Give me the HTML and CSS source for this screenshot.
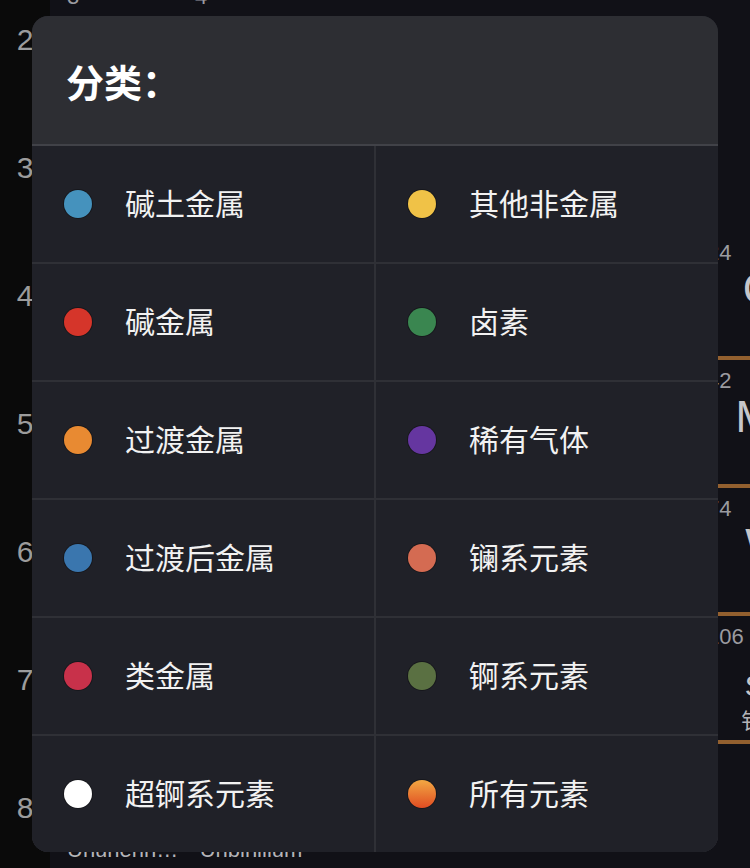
FILE: index.html
```html
<!DOCTYPE html>
<html lang="zh-CN">
<head>
<meta charset="utf-8">
<title>分类</title>
<link rel="stylesheet" href="styles.css">
</head>
<body>
<div class="page">
  <aside class="periods">
    <div class="period">2</div>
    <div class="period">3</div>
    <div class="period">4</div>
    <div class="period">5</div>
    <div class="period">6</div>
    <div class="period">7</div>
    <div class="period">8</div>
  </aside>
  <div class="table">
    <div class="row">
      <div class="cell"><div class="num">3</div></div>
      <div class="cell"><div class="num">4</div></div>
    </div>
    <div class="row">
      <div class="cell"></div>
      <div class="cell"></div>
    </div>
    <div class="row">
      <div class="cell"></div>
      <div class="cell"></div>
      <div class="cell"></div>
      <div class="cell"></div>
      <div class="cell"></div>
      <div class="cell"><div class="num">24</div><div class="sym">Cr</div></div>
    </div>
    <div class="row">
      <div class="cell"></div>
      <div class="cell"></div>
      <div class="cell"></div>
      <div class="cell"></div>
      <div class="cell"></div>
      <div class="cell"><div class="num">42</div><div class="sym">Mo</div></div>
    </div>
    <div class="row">
      <div class="cell"></div>
      <div class="cell"></div>
      <div class="cell"></div>
      <div class="cell"></div>
      <div class="cell"></div>
      <div class="cell"><div class="num">74</div><div class="sym">W</div></div>
    </div>
    <div class="row compact">
      <div class="cell"></div>
      <div class="cell"></div>
      <div class="cell"></div>
      <div class="cell"></div>
      <div class="cell"></div>
      <div class="cell"><div class="num">106</div><div class="sym">Sg</div><div class="name">钅喜</div></div>
    </div>
    <div class="row compact">
      <div class="cell"><div class="num"></div><div class="sym"></div><div class="name">Ununennium</div></div>
      <div class="cell"><div class="num"></div><div class="sym"></div><div class="name">Unbinilium</div></div>
    </div>
  </div>
</div>

<div class="modal">
  <div class="modal-head">
    <h2 class="title">分类：</h2>
  </div>
  <div class="grid">
    <div class="item"><span class="dot alkaline-earth"></span><span class="label">碱土金属</span></div>
    <div class="item"><span class="dot nonmetal"></span><span class="label">其他非金属</span></div>
    <div class="item"><span class="dot alkali"></span><span class="label">碱金属</span></div>
    <div class="item"><span class="dot halogen"></span><span class="label">卤素</span></div>
    <div class="item"><span class="dot transition"></span><span class="label">过渡金属</span></div>
    <div class="item"><span class="dot noble"></span><span class="label">稀有气体</span></div>
    <div class="item"><span class="dot post-transition"></span><span class="label">过渡后金属</span></div>
    <div class="item"><span class="dot lanthanide"></span><span class="label">镧系元素</span></div>
    <div class="item"><span class="dot metalloid"></span><span class="label">类金属</span></div>
    <div class="item"><span class="dot actinide"></span><span class="label">锕系元素</span></div>
    <div class="item"><span class="dot superactinide"></span><span class="label">超锕系元素</span></div>
    <div class="item"><span class="dot all"></span><span class="label">所有元素</span></div>
  </div>
</div>
</body>
</html>
```

FILE: styles.css
```css
html, body {
  margin: 0;
  padding: 0;
}

body {
  width: 750px;
  height: 868px;
  overflow: hidden;
  position: relative;
  background: #111117;
  font-family: "Liberation Sans", "Noto Sans CJK SC", sans-serif;
}

/* ---------- background periodic table ---------- */
.page {
  display: flex;
  align-items: flex-start;
  height: 868px;
  overflow: hidden;
}

.periods {
  width: 50px;
  flex: none;
  margin-top: -24px;
  background: #0a0a0a;
  display: flex;
  flex-direction: column;
}

.period {
  height: 128px;
  display: flex;
  align-items: center;
  justify-content: center;
  font-size: 30px;
  color: #9c9c9c;
}

.table {
  margin-top: -24px;
  padding-left: 9px;
  display: flex;
  flex-direction: column;
}

.row {
  display: flex;
  height: 128px;
}

.cell {
  width: 128px;
  height: 128px;
  box-sizing: border-box;
  padding: 8px 8px 0;
  border-bottom: 4px solid #93602f;
  display: flex;
  flex-direction: column;
  flex: none;
}

.num {
  height: 26px;
  font-size: 22px;
  line-height: 26px;
  color: #9b9ba0;
}

.sym {
  height: 44px;
  font-size: 44px;
  line-height: 44px;
  margin-top: 1px;
  padding-left: 6px;
  text-align: center;
  color: #c6c6ca;
}

.row.compact .sym {
  height: 36px;
  font-size: 30px;
  line-height: 36px;
  margin-top: 18px;
  padding-left: 0;
}

.name {
  margin-top: 5px;
  font-size: 22px;
  line-height: 26px;
  text-align: center;
  white-space: nowrap;
  overflow: hidden;
  text-overflow: ellipsis;
  color: #b4b4b8;
}

/* ---------- category dialog ---------- */
.modal {
  position: absolute;
  left: 32px;
  top: 16px;
  width: 686px;
  height: 836px;
  border-radius: 16px;
  overflow: hidden;
  background: #202128;
  display: flex;
  flex-direction: column;
}

.modal-head {
  height: 128px;
  flex: none;
  background: #2d2e33;
  border-bottom: 2px solid #414248;
  display: flex;
  align-items: center;
  padding-left: 34px;
}

.title {
  margin: 0;
  font-family: "Noto Sans CJK SC", sans-serif;
  font-weight: 700;
  font-size: 38px;
  color: #ffffff;
}

.grid {
  flex: 1;
  display: grid;
  grid-template-columns: 1fr 1fr;
  grid-template-rows: repeat(6, 1fr);
  gap: 2px;
  background: #2f3036;
}

.item {
  background: #202128;
  display: flex;
  align-items: center;
  padding-left: 32px;
}

.dot {
  width: 28px;
  height: 28px;
  border-radius: 50%;
  flex: none;
  box-shadow: 0 0 0 1px rgba(0, 0, 0, 0.3);
}

.label {
  margin-left: 33px;
  margin-bottom: 4px;
  font-family: "Noto Sans CJK SC", sans-serif;
  font-size: 30px;
  line-height: 40px;
  color: #f2f2f2;
}

.dot.alkaline-earth { background: #4592bd; }
.dot.nonmetal { background: #f0c247; }
.dot.alkali { background: #d5352a; }
.dot.halogen { background: #3a8650; }
.dot.transition { background: #e88a32; }
.dot.noble { background: #6536a0; }
.dot.post-transition { background: #3a76ae; }
.dot.lanthanide { background: #d46b52; }
.dot.metalloid { background: #c8314a; }
.dot.actinide { background: #5a7042; }
.dot.superactinide { background: #ffffff; }
.dot.all { background: linear-gradient(to bottom, #f2a843, #e04c22); }
```
